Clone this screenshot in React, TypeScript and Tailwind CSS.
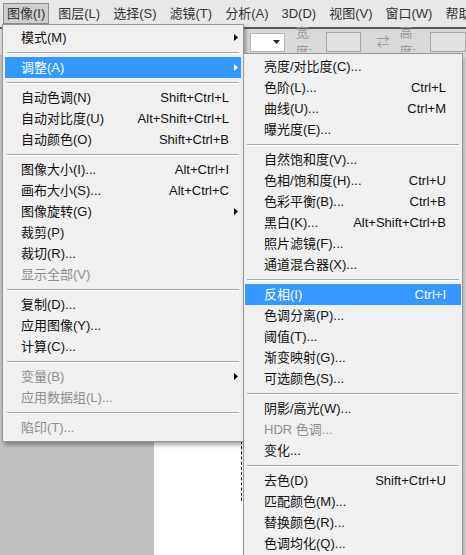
import React from 'react';

type Item =
  | { sep: true }
  | { label: string; shortcut?: string; sub?: boolean; disabled?: boolean; active?: boolean; sep?: false };

const mainItems: Item[] = [
  { label: '模式(M)', sub: true },
  { sep: true },
  { label: '调整(A)', sub: true, active: true },
  { sep: true },
  { label: '自动色调(N)', shortcut: 'Shift+Ctrl+L' },
  { label: '自动对比度(U)', shortcut: 'Alt+Shift+Ctrl+L' },
  { label: '自动颜色(O)', shortcut: 'Shift+Ctrl+B' },
  { sep: true },
  { label: '图像大小(I)...', shortcut: 'Alt+Ctrl+I' },
  { label: '画布大小(S)...', shortcut: 'Alt+Ctrl+C' },
  { label: '图像旋转(G)', sub: true },
  { label: '裁剪(P)' },
  { label: '裁切(R)...' },
  { label: '显示全部(V)', disabled: true },
  { sep: true },
  { label: '复制(D)...' },
  { label: '应用图像(Y)...' },
  { label: '计算(C)...' },
  { sep: true },
  { label: '变量(B)', sub: true, disabled: true },
  { label: '应用数据组(L)...', disabled: true },
  { sep: true },
  { label: '陷印(T)...', disabled: true },
];

const subItems: Item[] = [
  { label: '亮度/对比度(C)...' },
  { label: '色阶(L)...', shortcut: 'Ctrl+L' },
  { label: '曲线(U)...', shortcut: 'Ctrl+M' },
  { label: '曝光度(E)...' },
  { sep: true },
  { label: '自然饱和度(V)...' },
  { label: '色相/饱和度(H)...', shortcut: 'Ctrl+U' },
  { label: '色彩平衡(B)...', shortcut: 'Ctrl+B' },
  { label: '黑白(K)...', shortcut: 'Alt+Shift+Ctrl+B' },
  { label: '照片滤镜(F)...' },
  { label: '通道混合器(X)...' },
  { sep: true },
  { label: '反相(I)', shortcut: 'Ctrl+I', active: true },
  { label: '色调分离(P)...' },
  { label: '阈值(T)...' },
  { label: '渐变映射(G)...' },
  { label: '可选颜色(S)...' },
  { sep: true },
  { label: '阴影/高光(W)...' },
  { label: 'HDR 色调...', disabled: true },
  { label: '变化...' },
  { sep: true },
  { label: '去色(D)', shortcut: 'Shift+Ctrl+U' },
  { label: '匹配颜色(M)...' },
  { label: '替换颜色(R)...' },
  { label: '色调均化(Q)...' },
];

const menuBar = ['图像(I)', '图层(L)', '选择(S)', '滤镜(T)', '分析(A)', '3D(D)', '视图(V)', '窗口(W)', '帮助'];

const Arrow = ({ white }: { white?: boolean }) => (
  <svg width="4" height="7" viewBox="0 0 4 7" className="block">
    <path d="M0 0 L4 3.5 L0 7 Z" fill={white ? '#ffffff' : '#000000'} />
  </svg>
);

function Menu({ items, padL, padR }: { items: Item[]; padL: string; padR: string }) {
  return (
    <div className="flex flex-col">
      {items.map((it, i) => {
        if (it.sep) {
          return (
            <div key={i} className="h-[9px] flex flex-col justify-center px-[2px]">
              <div className="h-px bg-[#a9a9a9]" />
              <div className="h-px bg-white" />
            </div>
          );
        }
        const color = it.active ? 'text-white' : it.disabled ? 'text-[#8e8e8e]' : 'text-[#111]';
        return (
          <div
            key={i}
            className={`h-[21px] flex items-center ${padL} ${it.active ? 'bg-[#3399ff]' : ''} ${color}`}
          >
            <span className="flex-1 whitespace-nowrap">{it.label}</span>
            {it.shortcut && <span className="whitespace-nowrap">{it.shortcut}</span>}
            <span className={`${padR} flex justify-end`}>{it.sub && <Arrow white={it.active} />}</span>
          </div>
        );
      })}
    </div>
  );
}

export default function App() {
  return (
    <div
      className="relative w-[466px] h-[555px] overflow-hidden bg-[#c0c0c0] text-[13px]"
      style={{ fontFamily: '"Liberation Sans", "Noto Sans CJK SC", sans-serif' }}
    >
      {/* menu bar */}
      <div className="h-[27px] bg-[#e8e8e8] flex items-center pl-[3px] gap-[5px] text-[#333] overflow-hidden">
        {menuBar.map((m, i) => (
          <div
            key={m}
            className={`h-[21px] shrink-0 flex items-center px-[3px] whitespace-nowrap border ${
              i === 0 ? 'bg-[#cfcfcf] border-[#8f8f8f]' : 'border-transparent'
            }`}
          >
            {m}
          </div>
        ))}
      </div>

      {/* options bar */}
      <div className="h-[28px] bg-[#d9d9d9] border-t-2 border-[#585858] flex items-center pl-[250px] text-[#999]">
        <div className="w-[38px] h-[19px] bg-white border border-[#b5b5b5] flex items-center justify-end pr-[4px]">
          <svg width="7" height="4" viewBox="0 0 7 4">
            <path d="M0 0 L7 0 L3.5 4 Z" fill="#222" />
          </svg>
        </div>
        <span className="ml-[11px]">宽度:</span>
        <div className="ml-[4px] w-[39px] h-[20px] bg-[#e2e2e2] border border-[#a8a8a8]" />
        <span className="ml-[15px] text-[#9a9a9a]">⇄</span>
        <span className="ml-[10px]">高度:</span>
        <div className="ml-[4px] w-[40px] h-[20px] bg-[#e2e2e2] border border-[#a8a8a8]" />
      </div>

      {/* workspace */}
      <div className="flex h-[500px]">
        <div className="w-[154px] bg-[#c0c0c0]" />
        <div className="w-[310px] bg-white relative">
          <div className="absolute left-[87px] top-[386px] h-[60px] border-l border-dashed border-black" />
        </div>
        <div className="flex-1 bg-[#f0f0f0]" />
      </div>

      {/* main dropdown */}
      <div className="absolute left-[2px] top-[24px] w-[242px] bg-[#f0f0f0] border border-[#979797] pt-[2px] pb-[3px] px-[2px] shadow-[2px_3px_4px_rgba(0,0,0,0.35)]">
        <Menu items={mainItems} padL="pl-[16px]" padR="w-[12px] pr-[3px]" />
      </div>

      {/* submenu */}
      <div className="absolute left-[243px] top-[53px] w-[220px] bg-[#f0f0f0] border border-[#979797] pt-[2px] px-[1px] h-[520px] shadow-[2px_3px_4px_rgba(0,0,0,0.35)]">
        <Menu items={subItems} padL="pl-[19px]" padR="w-[15px]" />
      </div>
    </div>
  );
}
